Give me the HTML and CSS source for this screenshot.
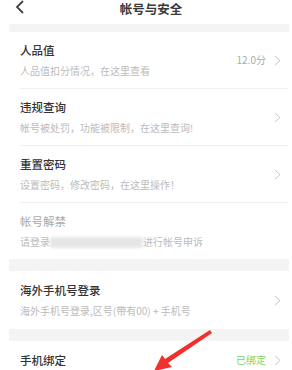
FILE: index.html
```html
<!DOCTYPE html>
<html lang="zh">
<head>
<meta charset="utf-8">
<link rel="stylesheet" href="styles.css">
</head>
<body>
<div class="page">
  <header class="topbar">
    <svg class="back" width="10" height="14" viewBox="0 0 10 14"><polyline points="8,1 2,7 8,13" fill="none" stroke="#444" stroke-width="1.8"/></svg>
    <div class="title">帐号与安全</div>
  </header>
  <div class="band b1"></div>
  <div class="row r1">
    <div class="texts"><div class="t">人品值</div><div class="s">人品值扣分情况，在这里查看</div></div>
    <div class="val">12.0分</div>
    <svg class="chev" width="7" height="11" viewBox="0 0 7 11"><polyline points="1,1 6,5.5 1,10" fill="none" stroke="#c8c8c8" stroke-width="1"/></svg>
  </div>
  <div class="row r2 line">
    <div class="texts"><div class="t">违规查询</div><div class="s">帐号被处罚，功能被限制，在这里查询!</div></div>
    <svg class="chev" width="7" height="11" viewBox="0 0 7 11"><polyline points="1,1 6,5.5 1,10" fill="none" stroke="#c8c8c8" stroke-width="1"/></svg>
  </div>
  <div class="row r3 line">
    <div class="texts"><div class="t">重置密码</div><div class="s">设置密码，修改密码，在这里操作！</div></div>
    <svg class="chev" width="7" height="11" viewBox="0 0 7 11"><polyline points="1,1 6,5.5 1,10" fill="none" stroke="#c8c8c8" stroke-width="1"/></svg>
  </div>
  <div class="row r4 line">
    <div class="texts"><div class="t dis">帐号解禁</div><div class="s">请登录<span class="blur"></span>进行帐号申诉</div></div>
  </div>
  <div class="band b2"></div>
  <div class="row r5">
    <div class="texts"><div class="t">海外手机号登录</div><div class="s">海外手机号登录,区号(带有00) + 手机号</div></div>
    <svg class="chev" width="7" height="11" viewBox="0 0 7 11"><polyline points="1,1 6,5.5 1,10" fill="none" stroke="#c8c8c8" stroke-width="1"/></svg>
  </div>
  <div class="band b2"></div>
  <div class="row r6">
    <div class="texts"><div class="t">手机绑定</div></div>
    <div class="val green">已绑定</div>
    <svg class="chev" width="7" height="11" viewBox="0 0 7 11"><polyline points="1,1 6,5.5 1,10" fill="none" stroke="#c8c8c8" stroke-width="1"/></svg>
  </div>
  <svg class="arrow" width="70" height="45" viewBox="0 0 70 45">
    <polygon points="62,2 64,5 20,35 24,39 6,43 14,27 17,31" fill="#f0302a"/>
  </svg>
</div>
</body>
</html>
```
FILE: styles.css
```css
html, body { margin: 0; padding: 0; background: #fff; }
body { font-family: "Noto Sans CJK SC", "Noto Sans", sans-serif; width: 292px; height: 370px; overflow: hidden; }
.page { position: relative; padding: 0 3px 0 9px; }
.topbar { height: 24px; position: relative; display: flex; align-items: flex-start; justify-content: center; padding-top: 1px; box-sizing: border-box; }
.back { position: absolute; left: 6px; top: 0px; }
.title { font-size: 12.5px; font-weight: bold; color: #3a3a3a; line-height: 15px; margin-left: 4px; }
.band { background: #f4f4f4; }
.b1 { height: 8px; }
.b2 { height: 12px; }
.row { display: flex; align-items: center; padding-left: 11px; padding-right: 8px; height: 56px; }
.row.line { border-top: 1px solid #f0f0f0; margin-left: 11px; padding-left: 0; }
.r5 { height: 58px; }
.r6 { height: 29px; align-items: flex-start; padding-top: 12px; }
.r6 .chev { margin-top: 2px; }
.texts { flex: 1; display: flex; flex-direction: column; gap: 8px; }
.t { font-size: 11.5px; line-height: 14px; color: #333; font-weight: 500; }
.t.dis { color: #aaa; font-weight: 400; }
.s { font-size: 10px; line-height: 12px; color: #bbb; display: flex; align-items: center; }
.blur { display: inline-block; width: 93px; height: 11px; background: #e6e6e6; filter: blur(1.5px); }
.val { font-size: 10px; line-height: 14px; color: #aaa; margin-right: 8px; }
.val.green { color: #7ed36a; }
.chev { display: block; }
.arrow { position: absolute; left: 148px; top: 328px; }
```
